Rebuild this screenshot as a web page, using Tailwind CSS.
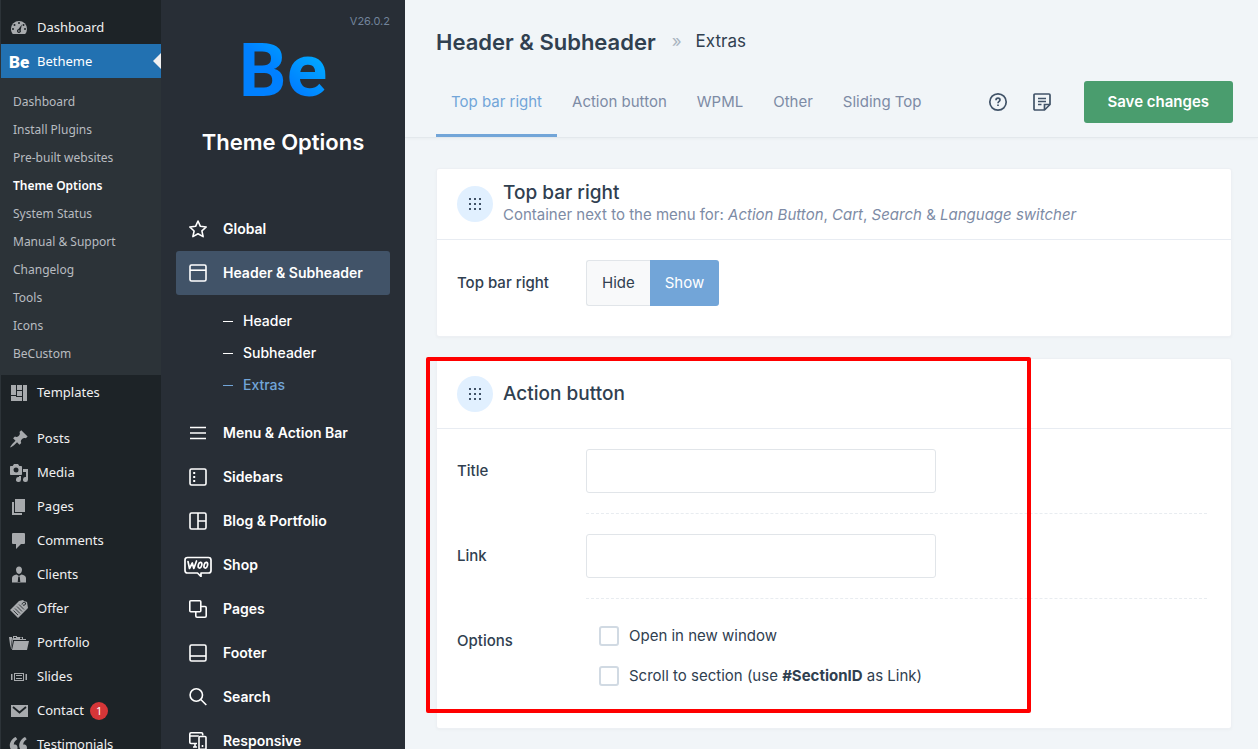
<!DOCTYPE html>
<html lang="en">
<head>
  <meta charset="UTF-8">
  <meta name="viewport" content="width=device-width, initial-scale=1.0">
  <title>Theme Options - Betheme</title>
  <script src="https://cdn.jsdelivr.net/npm/@tailwindcss/browser@4"></script>
</head>
<body class="flex h-screen overflow-hidden bg-[#f1f5f8] font-['Inter',sans-serif] text-[#304050]">

  <!-- WordPress menu -->
  <nav class="w-[161px] shrink-0 overflow-hidden border-l border-[#2c3338] bg-[#1d2327] pt-[10px] font-['Noto_Sans','Open_Sans',sans-serif] text-[13px] text-[#f0f0f1]">
    <a href="#" class="flex h-[34px] items-center gap-2 pl-2 pt-0.5">
      <svg class="size-5" viewBox="0 0 20 20" fill="#a7aaad"><path d="M3.800 16h12.400A8 8 0 0 0 18 11 8 8 0 0 0 2 11c0 1.900.7 3.600 1.800 5z"/><g fill="#1d2327"><circle cx="10" cy="5" r="1"/><circle cx="5.500" cy="7" r="1"/><circle cx="14.500" cy="7" r="1"/><circle cx="4" cy="11" r="1"/><circle cx="16" cy="11" r="1"/><path d="M12.900 6.500 11.700 12a2 2 0 1 1-2.200-1z"/></g><circle cx="9.900" cy="13" r=".8"/></svg>
      Dashboard
    </a>
    <a href="#" class="relative flex h-[34px] items-center gap-2 bg-[#2271b1] pl-2 pt-0.5 text-white">
      <span class="w-5 font-['Roboto',sans-serif] text-[17px] font-black leading-5">Be</span>
      Betheme
      <svg class="absolute right-0 top-[9px] h-4 w-2" viewBox="0 0 8 16" fill="#f0f0f1"><path d="M8 0v16L0 8z"/></svg>
    </a>

    <div class="bg-[#2c3338] pb-[7px] pt-[10px] text-xs text-[#b8bcc0]">
      <a href="#" class="flex h-7 items-center pl-3">Dashboard</a>
      <a href="#" class="flex h-7 items-center pl-3">Install Plugins</a>
      <a href="#" class="flex h-7 items-center pl-3">Pre-built websites</a>
      <a href="#" class="flex h-7 items-center pl-3 font-semibold text-white">Theme Options</a>
      <a href="#" class="flex h-7 items-center pl-3">System Status</a>
      <a href="#" class="flex h-7 items-center pl-3">Manual &amp; Support</a>
      <a href="#" class="flex h-7 items-center pl-3">Changelog</a>
      <a href="#" class="flex h-7 items-center pl-3">Tools</a>
      <a href="#" class="flex h-7 items-center pl-3">Icons</a>
      <a href="#" class="flex h-7 items-center pl-3">BeCustom</a>
    </div>

    <a href="#" class="mb-3 flex h-[34px] items-center gap-2 pl-2 pt-0.5">
      <svg class="size-5" viewBox="0 0 20 20" fill="#a7aaad"><path d="M2 2h5v10H2zM8 2h5v5H8zM8 8h5v5H8zM14 2h4v16h-4zM2 13h5v1h6v4H2z"/></svg>
      Templates
    </a>
    <a href="#" class="flex h-[34px] items-center gap-2 pl-2 pt-0.5">
      <svg class="size-5" viewBox="0 0 20 20" fill="#a7aaad"><path d="M10.440 3.020l1.820-1.820 6.360 6.350-1.830 1.820c-1.050-.68-2.480-.57-3.410.36l-.75.75c-.92.93-1.040 2.350-.35 3.410l-1.830 1.820-2.410-2.410-2.800 2.790c-.42.42-3.380 2.710-3.800 2.290s1.860-3.390 2.280-3.810l2.790-2.790L4.100 9.360l1.830-1.820c1.050.69 2.480.57 3.400-.36l.75-.75c.93-.92 1.050-2.350.36-3.410z"/></svg>
      Posts
    </a>
    <a href="#" class="flex h-[34px] items-center gap-2 pl-2 pt-0.5">
      <svg class="size-5" viewBox="0 0 20 20" fill="#a7aaad"><path fill-rule="evenodd" d="M13 11V4c0-.55-.45-1-1-1h-1.670L9 1H5L3.670 3H2c-.55 0-1 .45-1 1v7c0 .55.45 1 1 1h10c.55 0 1-.45 1-1zM7 4.500a2.500 2.500 0 1 1 0 5 2.500 2.500 0 0 1 0-5zM14 6h5v10.500a2.500 2.500 0 1 1-2-2.450V9h-3V6zM10 14.050V13h2v3.500a2.500 2.500 0 1 1-2-2.450z"/></svg>
      Media
    </a>
    <a href="#" class="flex h-[34px] items-center gap-2 pl-2 pt-0.5">
      <svg class="size-5" viewBox="0 0 20 20" fill="#a7aaad"><path d="M6 15V2h10v13H6zm-1 1h8v2H3V5h2v11z"/></svg>
      Pages
    </a>
    <a href="#" class="flex h-[34px] items-center gap-2 pl-2 pt-0.5">
      <svg class="size-5" viewBox="0 0 20 20" fill="#a7aaad"><path d="M4 2h11q1 0 1 1v9q0 1-1 1h-3l-5 5v-5H4q-1 0-1-1V3q0-1 1-1z"/></svg>
      Comments
    </a>
    <a href="#" class="flex h-[34px] items-center gap-2 pl-2 pt-0.5">
      <svg class="size-5" viewBox="0 0 20 20" fill="#a7aaad"><path d="M10 1.500c1.900 0 3 1.300 3 3.300C13 7 11.700 9 10 9S7 7 7 4.800c0-2 1.100-3.300 3-3.300zM7.500 9.500 10 11l2.500-1.500C15 10 17 11 17 13v4.500H3V13c0-2 2-3 4.500-3.500z"/><path d="M9.300 11.500h1.400l.6 5.500H8.700z" fill="#1d2327"/></svg>
      Clients
    </a>
    <a href="#" class="flex h-[34px] items-center gap-2 pl-2 pt-0.5">
      <svg class="size-5" viewBox="0 0 20 20" fill="#a7aaad"><path d="M1 11 10 2l4-1 1 1 3 1 1 6-10 10z"/><path d="M6 9.500l5 5M8 7.500l5 5M10 5.500l5 5M4.500 11.500l4.500 4.500" stroke="#1d2327" stroke-width=".8" fill="none"/><path d="M13 5.500c0-2 3-3 3.500-1.500S15 7 14 6" stroke="#1d2327" fill="none"/></svg>
      Offer
    </a>
    <a href="#" class="flex h-[34px] items-center gap-2 pl-2 pt-0.5">
      <svg class="size-5" viewBox="0 0 20 20" fill="#a7aaad"><path d="M0 4h3v1.500L1.500 15zM4 5V3h4v1h6v2h3v1H4L2.500 16H2L3.500 5zM5 8h15l-2 9H3z"/><path d="M5 4h2v1H5zM11 4.500h2V6h-2z" fill="#1d2327"/></svg>
      Portfolio
    </a>
    <a href="#" class="flex h-[34px] items-center gap-2 pl-2 pt-0.5">
      <svg class="size-5" viewBox="0 0 20 20" fill="#a7aaad"><path fill-rule="evenodd" d="M5 14V6h10v8H5zm-3-1V7h1.500v6zM6 7v6h8V7zm10.500 0H18v6h-1.500zM13 9V8H7v1zm0 3v-1H7v1z"/></svg>
      Slides
    </a>
    <a href="#" class="flex h-[34px] items-center gap-2 pl-2 pt-0.5">
      <svg class="size-5" viewBox="0 0 20 20" fill="#a7aaad"><path d="M2 4h17v12H2z"/><path d="m4 6 6.500 5.500L17 6" stroke="#1d2327" stroke-width="1.800" fill="none"/></svg>
      Contact
      <span class="-ml-0.5 flex size-[18px] items-center justify-center rounded-full bg-[#d63638] text-[11px] text-white">1</span>
    </a>
    <a href="#" class="flex h-[34px] items-center gap-2 pl-2 pt-0.5">
      <svg class="size-5" viewBox="0 0 20 20" fill="#a7aaad"><path d="M8.540 12.740c0-.87-.24-1.610-.72-2.220-.73-.92-2.140-1.030-2.960-.85-.34-1.930 1.300-4.390 3.420-5.450L6.650 1.940C3.450 3.460.31 6.960.85 11.370 1.190 14.160 2.800 16 5.080 16c1 0 1.830-.29 2.480-.88.66-.59.98-1.380.98-2.380zm9.430 0c0-.87-.24-1.610-.72-2.220-.73-.92-2.140-1.030-2.960-.85-.34-1.930 1.300-4.390 3.420-5.450l-1.630-2.280c-3.200 1.520-6.340 5.020-5.800 9.430.34 2.790 1.950 4.630 4.230 4.630 1 0 1.830-.29 2.480-.88.66-.59.98-1.380.98-2.380z"/></svg>
      Testimonials
    </a>
  </nav>

  <!-- Theme options menu -->
  <aside class="w-[244px] shrink-0 overflow-hidden bg-[#282e36] px-[15px] pt-3 text-sm font-semibold text-white">
    <div class="text-right text-[11px] font-normal leading-[18px] text-[#72849b]">V26.0.2</div>
    <div class="pt-0.5 text-center">
      <span class="inline-block bg-linear-to-tr from-[#0080ff] from-45% to-[#10bfff] bg-clip-text font-['Roboto',sans-serif] text-[75px] font-bold leading-[77px] text-transparent">Be</span>
    </div>
    <h1 class="mt-[18px] text-center text-[22px] leading-[30px]">Theme Options</h1>

    <div class="mt-[50px]">
      <a href="#" class="flex h-11 items-center gap-[15px] pl-3">
        <svg class="size-5" viewBox="0 0 20 20" fill="none" stroke="currentColor" stroke-width="1.600" stroke-linejoin="round"><path d="m10 2 2.400 5.300 5.800.7-4.300 3.900 1.200 5.700L10 14.800l-5.100 2.800L6.100 12 1.800 8l5.800-.7z"/></svg>
        Global
      </a>
      <a href="#" class="flex h-11 items-center gap-[15px] rounded-[3px] bg-[#415368] pl-3">
        <svg class="size-5" viewBox="0 0 20 20" fill="none" stroke="currentColor" stroke-width="1.600"><rect x="2" y="2" width="16" height="16" rx="1.500"/><path d="M2 7.200h16"/></svg>
        Header &amp; Subheader
      </a>
      <div class="py-[10px] pl-[47px] font-medium">
        <a href="#" class="flex h-8 items-center gap-[10px]"><span class="h-px w-[10px] bg-current"></span>Header</a>
        <a href="#" class="flex h-8 items-center gap-[10px]"><span class="h-px w-[10px] bg-current"></span>Subheader</a>
        <a href="#" class="flex h-8 items-center gap-[10px] text-[#72a5d8]"><span class="h-px w-[10px] bg-current"></span>Extras</a>
      </div>
      <a href="#" class="flex h-11 items-center gap-[15px] pl-3">
        <svg class="size-5" viewBox="0 0 20 20" fill="none" stroke="currentColor" stroke-width="1.600"><path d="M2 4.500h16M2 10h16M2 15.500h16"/></svg>
        Menu &amp; Action Bar
      </a>
      <a href="#" class="flex h-11 items-center gap-[15px] pl-3">
        <svg class="size-5" viewBox="0 0 20 20" fill="none" stroke="currentColor" stroke-width="1.600"><rect x="2" y="2" width="16" height="16" rx="1.500"/><path d="M6.200 5v10" stroke-width="2" stroke-dasharray="2 2"/></svg>
        Sidebars
      </a>
      <a href="#" class="flex h-11 items-center gap-[15px] pl-3">
        <svg class="size-5" viewBox="0 0 20 20" fill="none" stroke="currentColor" stroke-width="1.600"><rect x="2" y="2" width="16" height="16" rx="1.500"/><path d="M10 2v16M10 10h8"/></svg>
        Blog &amp; Portfolio
      </a>
      <a href="#" class="flex h-11 items-center gap-[11px] pl-2">
        <svg class="h-6 w-7" viewBox="0 0 28 24" fill="none" stroke="currentColor" stroke-width="1.700" stroke-linejoin="round" stroke-linecap="round"><path d="M3.500 4.500h21Q27 4.500 27 7v10.500q0 2.500-2.500 2.500h-7.500v3.500L13.500 20h-10Q1 20 1 17.500V7q0-2.500 2.500-2.500z"/><path d="m4 8.500 1.500 7L8.300 10l1.500 5.500L12.500 8"/><ellipse cx="16" cy="12.200" rx="1.700" ry="2.900" transform="rotate(15 16 12.200)"/><ellipse cx="21.800" cy="12.200" rx="1.700" ry="2.900" transform="rotate(15 21.800 12.200)"/></svg>
        Shop
      </a>
      <a href="#" class="flex h-11 items-center gap-[15px] pl-3">
        <svg class="size-5" viewBox="0 0 20 20" fill="none" stroke="currentColor" stroke-width="1.600"><rect x="1.800" y="1.800" width="11" height="11" rx="1"/><path d="M12.800 7.500H17q1.200 0 1.200 1.200V17q0 1.200-1.200 1.200H9q-1.200 0-1.200-1.200v-4.200"/></svg>
        Pages
      </a>
      <a href="#" class="flex h-11 items-center gap-[15px] pl-3">
        <svg class="size-5" viewBox="0 0 20 20" fill="none" stroke="currentColor" stroke-width="1.600"><rect x="2" y="2" width="16" height="16" rx="1.500"/><path d="M2 13h16"/></svg>
        Footer
      </a>
      <a href="#" class="flex h-11 items-center gap-[15px] pl-3">
        <svg class="size-5" viewBox="0 0 20 20" fill="none" stroke="currentColor" stroke-width="1.600"><circle cx="8.300" cy="8" r="6.200"/><path d="m12.800 12.500 5.500 5.500"/></svg>
        Search
      </a>
      <a href="#" class="flex h-11 items-center gap-[15px] pl-3">
        <svg class="size-5" viewBox="0 0 20 20" fill="none" stroke="currentColor" stroke-width="1.600"><path d="M9 12.500H3q-1.200 0-1.200-1.200V3Q1.800 1.800 3 1.800h10.500q1.200 0 1.200 1.200v1.500M1.800 5h9M5 16h4M7 12.500V16"/><rect x="11" y="5.500" width="7" height="12.700" rx="1"/><path d="M14.500 14v2"/></svg>
        Responsive
      </a>
    </div>
  </aside>

  <!-- Options panel -->
  <main class="min-w-0 flex-1 text-[15px]">
    <header class="border-b border-[#e3e8ec] pl-[31px] pr-[25px] shadow-[0_1px_3px_rgba(0,0,0,0.03)]">
      <div class="flex h-[67px] items-center pt-[17px]">
        <h2 class="text-[22px] font-semibold">Header &amp; Subheader</h2>
        <span class="ml-4 text-[17px] text-[#a9b4c0]">»</span>
        <span class="ml-[14px] text-[17px]">Extras</span>
      </div>
      <div class="flex h-[70px] items-center">
        <div class="flex h-full text-[#7d8ba5]">
          <a href="#" class="flex items-center border-b-3 border-[#72a5d8] px-[15px] pt-[3px] text-[#72a5d8]">Top bar right</a>
          <a href="#" class="flex items-center border-b-3 border-transparent px-[15px] pt-[3px]">Action button</a>
          <a href="#" class="flex items-center border-b-3 border-transparent px-[15px] pt-[3px]">WPML</a>
          <a href="#" class="flex items-center border-b-3 border-transparent px-[15px] pt-[3px]">Other</a>
          <a href="#" class="flex items-center border-b-3 border-transparent px-[15px] pt-[3px]">Sliding Top</a>
        </div>
        <div class="ml-auto flex items-center">
          <button type="button" aria-label="Help" class="mr-6">
            <svg class="size-5" viewBox="0 0 20 20" fill="none" stroke="#415368" stroke-width="1.700"><circle cx="10" cy="10" r="8.200"/><path d="M8 8.200q0-2 2-2t2 1.800c0 1.400-2 1.300-2 3.200"/><path d="M10 12.400v1.700"/></svg>
          </button>
          <button type="button" aria-label="Notes" class="mr-8">
            <svg class="size-5" viewBox="0 0 20 20" fill="none" stroke="#415368" stroke-width="1.700"><path d="M12.500 18H3q-1 0-1-1V3q0-1 1-1h14q1 0 1 1v9.500z" stroke-linejoin="round"/><path d="M12.500 18v-5.500H18M6 6.500h8M6 9.500h8M6 12.500h3.500"/></svg>
          </button>
          <button type="button" class="h-[42px] rounded-[3px] bg-[#4a9d6e] px-6 font-semibold text-white">Save changes</button>
        </div>
      </div>
    </header>

    <div class="flex flex-col gap-[21px] pl-[31px] pr-[26px] pt-[30px]">
      <section class="rounded-[3px] border border-[#edf0f4] bg-white pb-[30px] shadow-[0_1px_3px_rgba(0,0,0,0.03)]">
        <div class="flex h-[71px] items-center gap-[10px] border-b border-[#e8ecf2] pl-5">
          <svg class="size-9 rounded-full bg-[#e1f0ff]" viewBox="0 0 36 36" fill="#415368"><path d="M12 12h2v2h-2zM17 12h2v2h-2zM22 12h2v2h-2zM12 17h2v2h-2zM17 17h2v2h-2zM22 17h2v2h-2zM12 22h2v2h-2zM17 22h2v2h-2zM22 22h2v2h-2z"/></svg>
          <div>
            <h3 class="text-[19px] font-medium leading-[22px]">Top bar right</h3>
            <p class="leading-[22px] text-[#7d8ba5]">Container next to the menu for: <em>Action Button</em>, <em>Cart</em>, <em>Search</em> &amp; <em>Language switcher</em></p>
          </div>
        </div>
        <div class="flex items-center px-5 pt-5">
          <span class="w-[129px] font-medium">Top bar right</span>
          <div class="flex h-[46px]">
            <button type="button" class="rounded-l-[3px] border border-r-0 border-[#e1e5e9] bg-[#f8f9fa] px-[15px]">Hide</button>
            <button type="button" class="rounded-r-[3px] bg-[#72a5d8] px-[15px] text-white">Show</button>
          </div>
        </div>
      </section>

      <section class="relative rounded-[3px] border border-[#edf0f4] bg-white pb-8 shadow-[0_1px_3px_rgba(0,0,0,0.03)]">
        <div class="flex h-[70px] items-center gap-[10px] border-b border-[#e8ecf2] pl-5">
          <svg class="size-9 rounded-full bg-[#e1f0ff]" viewBox="0 0 36 36" fill="#415368"><path d="M12 12h2v2h-2zM17 12h2v2h-2zM22 12h2v2h-2zM12 17h2v2h-2zM17 17h2v2h-2zM22 17h2v2h-2zM12 22h2v2h-2zM17 22h2v2h-2zM22 22h2v2h-2z"/></svg>
          <h3 class="text-[19px] font-medium leading-[22px]">Action button</h3>
        </div>
        <div class="flex pl-5 pr-6 pt-5">
          <label for="title" class="w-[129px] font-medium leading-[44px]">Title</label>
          <div class="flex-1 border-b border-dashed border-[#e8ecf0] pb-5">
            <input id="title" type="text" class="block h-11 w-[350px] rounded-[3px] border border-[#e1e5e9] px-3">
          </div>
        </div>
        <div class="flex pl-5 pr-6 pt-5">
          <label for="link" class="w-[129px] font-medium leading-[44px]">Link</label>
          <div class="flex-1 border-b border-dashed border-[#e8ecf0] pb-5">
            <input id="link" type="text" class="block h-11 w-[350px] rounded-[3px] border border-[#e1e5e9] px-3">
          </div>
        </div>
        <div class="flex pl-5 pr-6 pt-[17px]">
          <span class="w-[129px] font-medium leading-[50px]">Options</span>
          <div class="pl-[13px]">
            <label class="flex h-10 items-center gap-[10px]"><input type="checkbox" class="size-5 appearance-none rounded-[3px] border-2 border-[#d1dae3]">Open in new window</label>
            <label class="flex h-10 items-center gap-[10px]"><input type="checkbox" class="size-5 appearance-none rounded-[3px] border-2 border-[#d1dae3]"><span>Scroll to section (use <b>#SectionID</b> as Link)</span></label>
          </div>
        </div>
        <!-- highlight frame -->
        <div class="pointer-events-none absolute -left-[11px] -top-[2px] h-[356px] w-[605px] rounded-[2px] border-4 border-[#ff0000]"></div>
      </section>
    </div>
  </main>

</body>
</html>
